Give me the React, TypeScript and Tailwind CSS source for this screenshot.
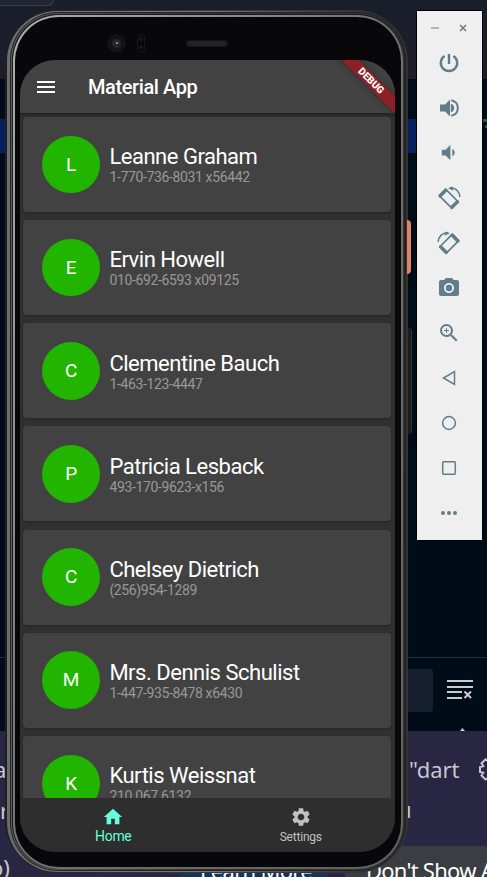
import type { ReactNode } from "react";
import {
  MdHome,
  MdMenu,
  MdPhotoCamera,
  MdSettings,
  MdVolumeDown,
  MdZoomIn,
} from "react-icons/md";

const contacts = [
  { name: "Leanne Graham", phone: "1-770-736-8031 x56442" },
  { name: "Ervin Howell", phone: "010-692-6593 x09125" },
  { name: "Clementine Bauch", phone: "1-463-123-4447" },
  { name: "Patricia Lesback", phone: "493-170-9623-x156" },
  { name: "Chelsey Dietrich", phone: "(256)954-1289" },
  { name: "Mrs. Dennis Schulist", phone: "1-447-935-8478 x6430" },
  { name: "Kurtis Weissnat", phone: "210.067.6132" },
];

function Rotate({ flip = false }: { flip?: boolean }) {
  return (
    <svg width="24" height="24" viewBox="0 0 24 24" className={flip ? "-scale-x-100" : ""} fill="none" stroke="currentColor">
      <path d="M8.6 3.2 21.4 16 15 22.4 2.2 9.6Z" strokeWidth="1.7" strokeLinejoin="round" />
      <path d="M9 4.2 3.2 10M20.4 15.6 14.6 21.4" strokeWidth="3.2" strokeLinecap="round" />
      <path d="M13 1.7C18.5 1.3 22.5 5.5 22.9 11" strokeWidth="1.5" />
      <path d="m11 2.2 4.5-1.7 1 4.2Z" fill="currentColor" stroke="none" />
    </svg>
  );
}

function Tool({ children }: { children: ReactNode }) {
  return <div className="flex h-[45px] items-center justify-center">{children}</div>;
}

function Backdrop() {
  return (
    <div className="flex h-full flex-col">
      <div className="h-[79px] shrink-0 bg-linear-to-b from-[#191e2b] to-[#201c2b]">
        <div className="h-[6px] w-[54px] rounded-br-lg border-r border-b border-[#3a3e48] bg-[#222632]" />
      </div>
      <div className="flex h-[578px] shrink-0 flex-col bg-[#000c17] pt-10">
        <div className="flex h-[34px] items-start">
          <div className="h-full w-[417px] shrink-0 bg-[#08205c]" />
          <div className="ml-[66px] flex flex-col items-end gap-[3px]">
            <div className="h-[3px] w-1 bg-[#1d5a35]" />
            <div className="h-[3px] w-[2px] bg-[#3a4552]" />
          </div>
        </div>
      </div>
      <div className="flex h-[74px] shrink-0 items-start justify-end border-t border-[#222b43] bg-[#000c17] pt-[11px]">
        <div className="h-[43px] w-[60px] rounded-[3px] bg-[#161f30]" />
        <div className="flex h-[62px] w-[54px] flex-col items-center pt-[10px]">
          <svg width="26" height="20" viewBox="0 0 26 20" fill="none" stroke="#c9cbce" strokeWidth="2">
            <path d="M0 2h26M0 8h26M0 13h15M0 19h15M17.5 12.5l6.5 6.5M24 12.5l-6.5 6.5" />
          </svg>
          <svg className="mt-[29px] ml-1 shrink-0" width="5" height="3" viewBox="0 0 5 3">
            <path d="M0 3 2.5 0 5 3Z" fill="#c9cbce" />
          </svg>
        </div>
      </div>
      <div className="relative h-[146px] shrink-0 overflow-hidden bg-[#292644] font-['Noto_Sans','Open_Sans',sans-serif] text-[22px] leading-8 text-[#c8c7cf]">
        <span className="absolute top-[22px] left-[-6px]">a</span>
        <span className="absolute top-[63px] left-0">r</span>
        <span className="absolute top-[120px] left-[-10px]">o)</span>
        <span className="absolute top-[22px] left-[409px]">"dart</span>
        <span className="absolute top-[62px] left-[398px]">u</span>
        <svg className="absolute top-[26px] left-[479px]" width="25" height="25" viewBox="0 0 25 25" fill="none" stroke="#c5c5cd" strokeWidth="2">
          <path d="M10 1h5l.7 3.2 2.8-1.8 4 4-1.8 2.7 3.3.9v5l-3.3.7 1.8 2.8-4 4-2.8-1.8L15 24h-5l-.9-3.3-2.6 1.8-4-4 1.8-2.8L1 15v-5l3.3-.9-1.8-2.7 4-4 2.6 1.8Z" />
          <circle cx="12.5" cy="12.5" r="3.5" />
        </svg>
        <div className="absolute top-[115px] left-[180px] h-10 w-[148px] bg-[#1c3454] pl-[20px] whitespace-nowrap text-white">
          <span className="relative top-[8px] tracking-[-0.7px]">Learn More</span>
        </div>
        <div className="absolute top-[115px] left-[345px] h-10 w-[150px] bg-[#3a3d41] pl-[21px] whitespace-nowrap text-white">
          <span className="relative top-[8px] tracking-[-0.75px]">Don't Show Again</span>
        </div>
      </div>
    </div>
  );
}

function Phone() {
  return (
    <div className="absolute top-[10px] left-[5px] h-[863px] w-[403px]">
      <div className="absolute top-[210px] right-[-3px] h-[54px] w-1 rounded-r-sm bg-[#e08468]" />
      <div className="absolute top-[318px] right-[-4px] h-[106px] w-1 rounded-r-sm border-r border-[#353535] bg-[#1c1c1c]" />
      <div className="h-full rounded-[52px] bg-linear-to-r from-[#1d2023] via-[#393939] to-[#333333] pt-px pr-[2px] pb-px pl-[2px]">
        <div className="h-full rounded-[50px] bg-linear-to-r from-[#6c6c6c] via-[#777777] via-50% to-[#222222] pt-px pr-px pb-px pl-[3px]">
          <div className="h-full rounded-[48px] bg-[#242424] pt-px pr-px pb-px pl-px">
            <div className="h-full rounded-[47px] bg-linear-to-r from-[#5c5c5c] via-[#303030] to-[#363636] pt-px pr-px pb-px pl-px">
              <div className="h-full rounded-[46px] bg-[#1b1b1b] pt-px pl-px">
                <div className="h-full rounded-[46px] bg-linear-to-br from-[#b0b0b0] via-[#707070] to-[#606060] pt-[2px] pr-[2px] pb-[2px] pl-[2px]">
                  <div className="h-full rounded-[44px] bg-[#08080a] pl-[5px]">
                    <div className="flex h-[43px] w-full shrink-0 items-center pt-[9px] pl-[87px]">
                      <div className="flex size-[19px] items-center justify-center rounded-full border border-[#121214] bg-[#141416]">
                        <div className="flex size-[9px] items-center justify-center rounded-full bg-[#25262b]">
                          <div className="size-[2px] rounded-full bg-[#a3a7b4]" />
                        </div>
                      </div>
                      <div className="ml-[11px] flex h-[19px] w-[8px] flex-col justify-around rounded-sm border border-[#18181a] px-px">
                        <div className="size-1 rounded-full bg-[#19191b]" />
                        <div className="size-1 rounded-full bg-[#19191b]" />
                      </div>
                      <div className="ml-[41px] h-[7px] w-[42px] rounded-full border border-[#161618] bg-[#232325]" />
                    </div>
                    <Screen />
                  </div>
                </div>
              </div>
            </div>
          </div>
        </div>
      </div>
    </div>
  );
}

function Screen() {
  return (
    <div className="relative flex h-[792px] w-[375px] shrink-0 flex-col overflow-hidden rounded-[35px] bg-[#303030] text-white">
      <header className="flex h-[53px] shrink-0 items-center bg-[#424242] pl-[14px] shadow-[0_1px_3px_#1b1b1b]">
        <MdMenu size={24} />
        <h1 className="ml-[30px] pt-px text-[20px] leading-6 font-medium tracking-[-0.4px]">Material App</h1>
      </header>
      <div className="absolute top-[15px] right-[-28px] flex h-[12px] w-[104px] rotate-45 items-center justify-center bg-[#8c2024] text-[10px] leading-none font-black shadow-[0_0_5px_#292929]">
        DEBUG
      </div>
      <main className="flex min-h-0 flex-1 flex-col gap-[8.15px] overflow-hidden pt-1 pr-1 pl-[3.4px]">
        {contacts.map((contact) => (
          <article key={contact.name} className="flex h-[95px] shrink-0 items-center rounded-[4px] bg-[#424242] pl-[19px] shadow-[0_1px_2px_#252525]">
            <div className="flex size-[57.5px] items-center justify-center rounded-full bg-[#22b500] pt-px text-[19px]">
              {contact.name[0]}
            </div>
            <div className="ml-[9.5px] pt-[2.6px]">
              <div className="text-[22px] leading-[23px] tracking-[-0.48px]">{contact.name}</div>
              <div className="text-[14px] leading-[18px] tracking-[-0.36px] text-[#989898]">{contact.phone}</div>
            </div>
          </article>
        ))}
      </main>
      <nav className="grid h-[54px] shrink-0 grid-cols-2 bg-[#2e2e2e]">
        <div className="flex flex-col items-center pt-[8px] pr-px text-[#64ffda]">
          <MdHome size={22} />
          <span className="text-[14px] leading-[17px] tracking-[-0.35px]">Home</span>
        </div>
        <div className="flex flex-col items-center pt-[8px] pr-px text-[#c0c0c0]">
          <MdSettings size={22} />
          <span className="text-[12px] leading-[19px] tracking-[-0.2px]">Settings</span>
        </div>
      </nav>
    </div>
  );
}

function Toolbar() {
  return (
    <aside className="absolute top-[10px] left-[416px] h-[531px] w-[67px] border border-black bg-[#efefef] pr-[2px] text-[#607d8b]">
      <div className="flex h-[29px] items-end justify-center gap-[20px] pb-[8px]">
        <svg width="8" height="8" viewBox="0 0 8 8" stroke="#94a2a9" strokeWidth="1.5"><path d="M0 4h8" /></svg>
        <svg width="8" height="8" viewBox="0 0 8 8" stroke="currentColor" strokeWidth="1.5"><path d="m1 1 6 6M7 1 1 7" /></svg>
      </div>
      <Tool>
        <svg width="24" height="24" viewBox="0 0 24 24" fill="none" stroke="currentColor" strokeWidth="2.4">
          <path d="M12 3v10M7.6 4.9A8.2 8.2 0 1 0 16.4 4.9" />
        </svg>
      </Tool>
      <Tool>
        <svg width="24" height="24" viewBox="0 0 24 24" fill="currentColor">
          <path d="M3 8.5v7h5l5 5v-17l-5 5H3Z" />
          <path d="M13.8 7.5c2.2.8 3.4 2.4 3.4 4.5s-1.2 3.7-3.4 4.5Z" />
          <path d="M14.3 4.2c4 .9 6.5 4 6.5 7.8s-2.5 6.9-6.5 7.8" fill="none" stroke="currentColor" strokeWidth="2" />
        </svg>
      </Tool>
      <Tool><MdVolumeDown size={23} /></Tool>
      <Tool><Rotate /></Tool>
      <Tool><Rotate flip /></Tool>
      <Tool><MdPhotoCamera size={24} /></Tool>
      <Tool><MdZoomIn size={24} /></Tool>
      <Tool>
        <svg width="14" height="16" viewBox="0 0 14 16" fill="none" stroke="currentColor" strokeWidth="1.5"><path d="M12.5 1.5v13L1.5 8Z" /></svg>
      </Tool>
      <Tool>
        <svg width="16" height="16" viewBox="0 0 16 16" fill="none" stroke="currentColor" strokeWidth="1.5"><circle cx="8" cy="8" r="6.4" /></svg>
      </Tool>
      <Tool>
        <svg width="16" height="16" viewBox="0 0 16 16" fill="none" stroke="currentColor" strokeWidth="1.5"><rect x="1.7" y="1.7" width="12.6" height="12.6" rx="1" /></svg>
      </Tool>
      <Tool>
        <div className="flex gap-[2px]">
          <i className="size-1 rounded-full bg-current" />
          <i className="size-1 rounded-full bg-current" />
          <i className="size-1 rounded-full bg-current" />
        </div>
      </Tool>
    </aside>
  );
}

export default function App() {
  return (
    <div className="relative h-[877px] w-[487px] overflow-hidden font-[Roboto,sans-serif]">
      <Backdrop />
      <Phone />
      <Toolbar />
    </div>
  );
}
